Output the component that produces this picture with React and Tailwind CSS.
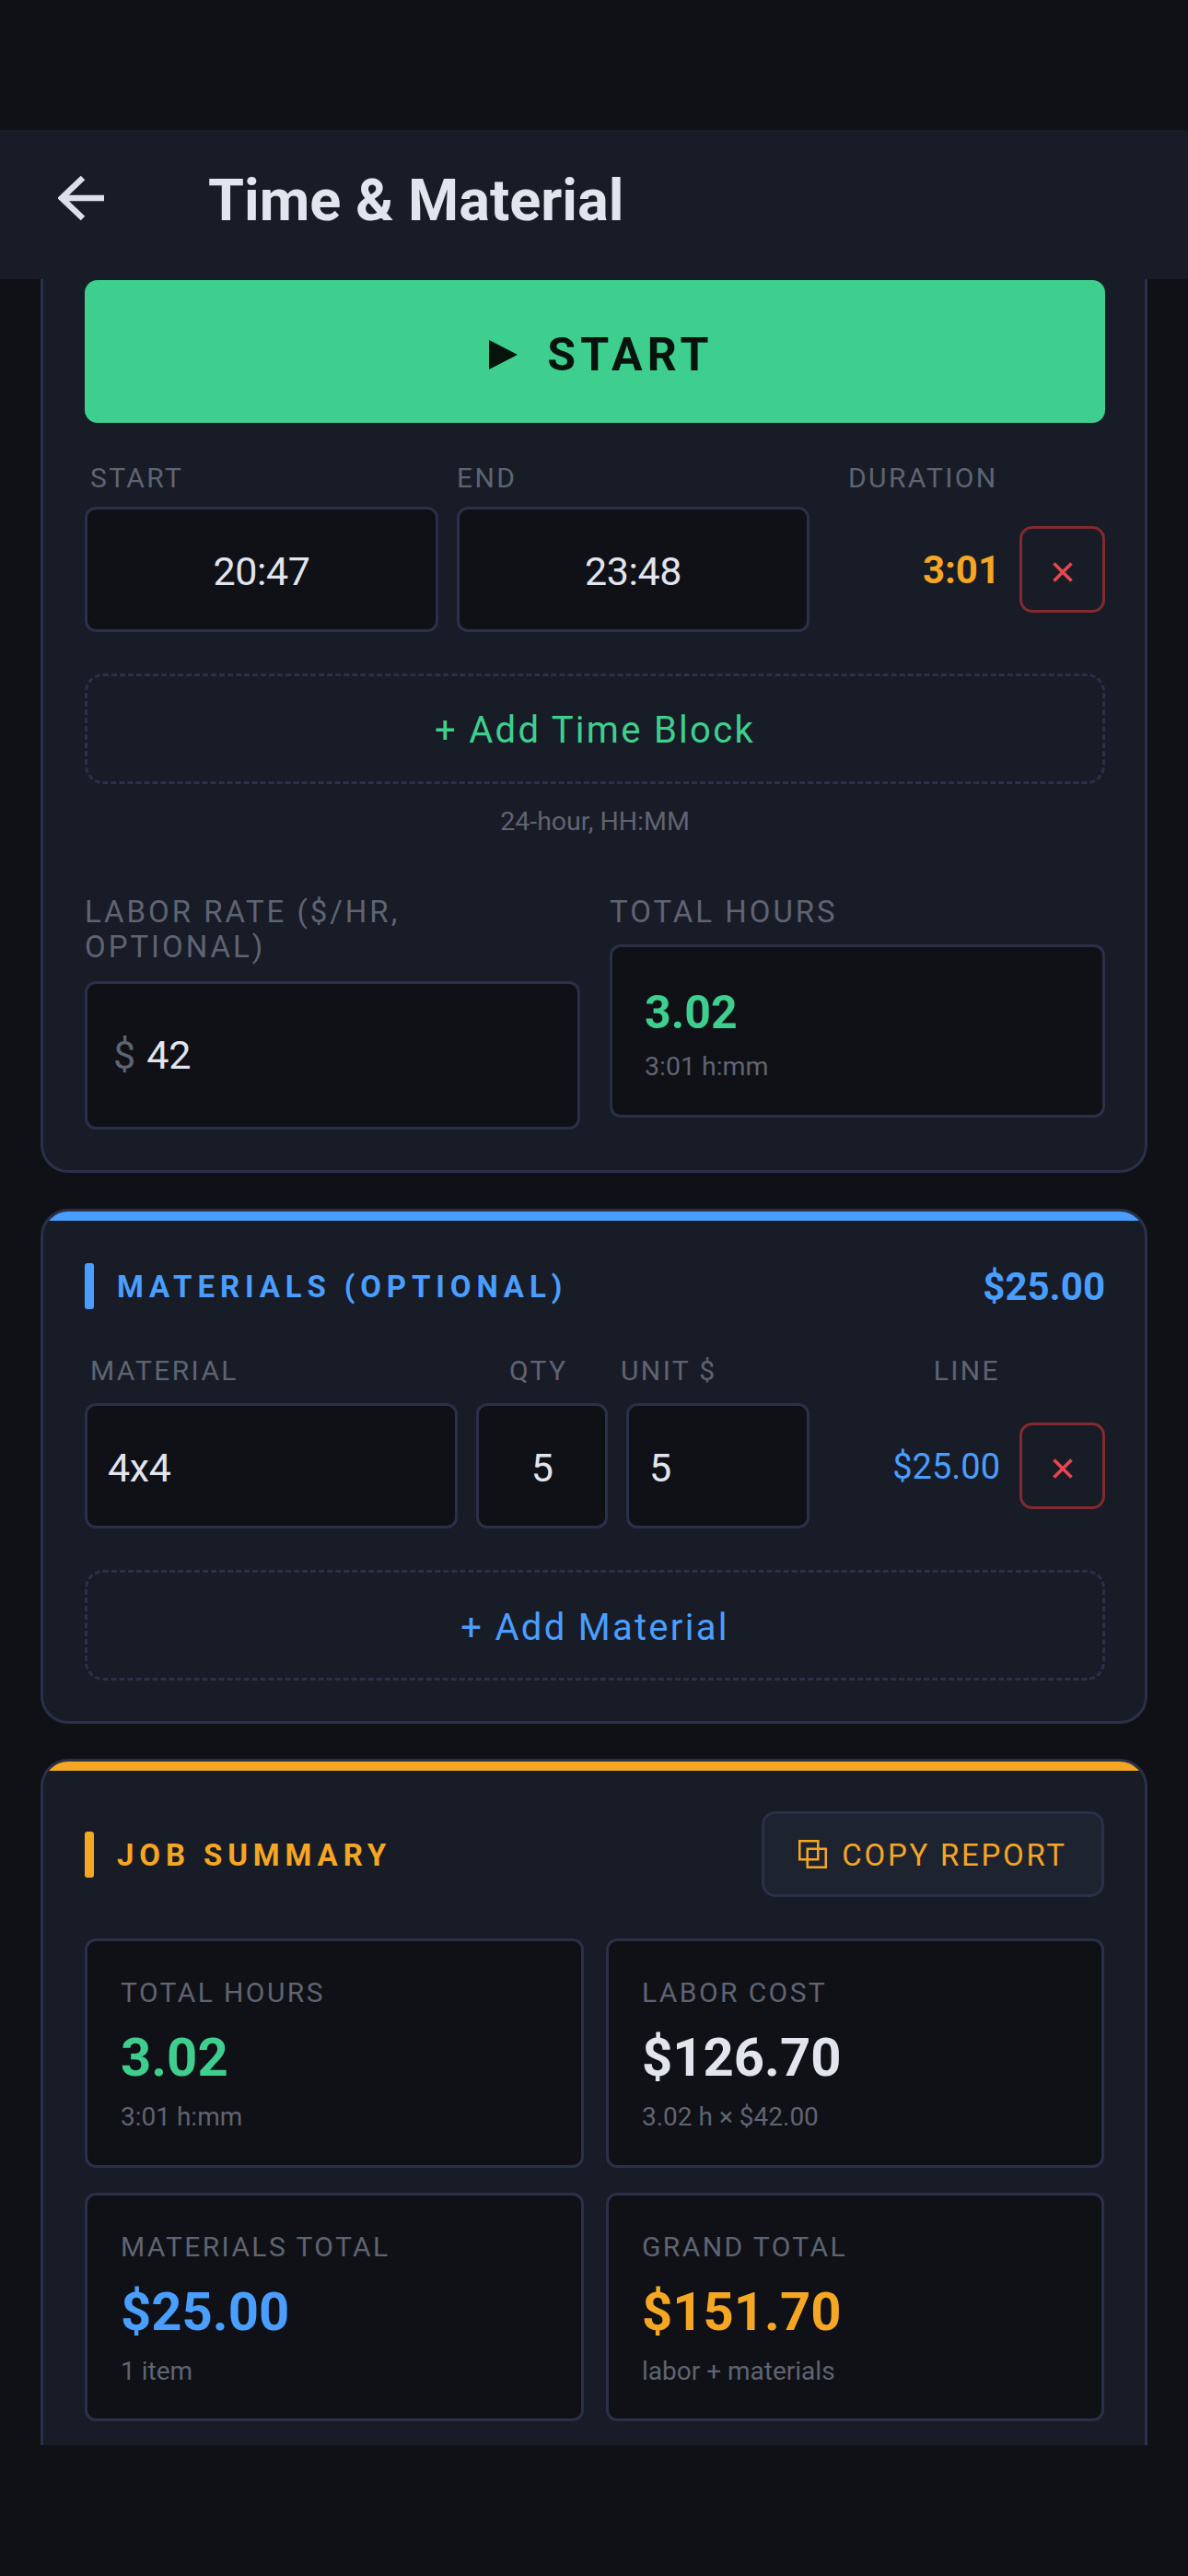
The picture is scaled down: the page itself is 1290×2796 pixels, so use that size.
const labelCls = "text-[30px] leading-[30px] tracking-[0.08em] text-[#5f6472]"
const bigLabelCls = "text-[33px] leading-[38px] tracking-[0.09em] text-[#5f6472]"
const inputCls = "w-full h-[136px] rounded-xl border-[3px] border-[#2a3048] bg-[#0f1116] pt-[3px] text-[43px] tracking-[-0.01em] text-[#e2e4ee] outline-none"

function DeleteButton() {
  return (
    <button className="w-[93px] h-[94px] justify-self-end rounded-[14px] border-[3px] border-[#842a2e] flex items-center justify-center">
      <svg className="mt-[6px]" width="22" height="22" viewBox="0 0 22 22" fill="none" stroke="#e5484d" strokeWidth="3.6">
        <path d="M1.5 1.5L20.5 20.5M20.5 1.5L1.5 20.5" />
      </svg>
    </button>
  )
}

function SectionTitle({ color, barColor, children }) {
  return (
    <div className="flex items-center gap-[25px]">
      <div className={`w-[10px] h-[50px] rounded-[3px] ${barColor}`} />
      <span className={`pt-[2px] text-[33px] leading-[48px] font-bold tracking-[0.178em] ${color}`}>{children}</span>
    </div>
  )
}

function StatCell({ label, value, sub, color }) {
  return (
    <div className="h-[248.5px] rounded-xl border-[3px] border-[#2a3048] bg-[#0f1116] pl-[36px] pt-[41px]">
      <div className={labelCls}>{label}</div>
      <div className={`mt-[21px] text-[58px] leading-[68px] font-bold ${color}`}>{value}</div>
      <div className="mt-[14px] text-[28px] leading-[34px] text-[#5f6472]">{sub}</div>
    </div>
  )
}

export default function App() {
  return (
    <div className="h-[2796px] bg-[#0f1116] font-['Roboto',sans-serif] flex flex-col">
      <div className="h-[141px]" />
      <header className="h-[162px] bg-[#181c27] flex items-center pl-[63px]">
        <svg className="-mt-[14px]" width="50" height="50" viewBox="0 0 50 50" fill="none" stroke="#dde0ea" strokeWidth="6.5">
          <path d="M50 25H5M27 3L4 25L27 47" />
        </svg>
        <h1 className="ml-[113px] -mt-[8px] text-[63px] font-bold text-[#e2e4ee]">Time &amp; Material</h1>
      </header>

      <main className="h-[2351px] overflow-hidden px-[44px]">
        {/* timer card, top is scrolled under the header */}
        <section className="bg-[#181c27] border-[3px] border-t-0 border-[#2a3048] rounded-b-[30px] pl-[45px] pr-[43px] pb-[44px] pt-px">
          <button className="w-full h-[155px] rounded-[14px] bg-[#3ecf8e] flex items-center justify-center gap-[32px] pt-[7px] pl-[14px] text-[#07130d]">
            <svg width="31" height="32" viewBox="0 0 31 32" fill="currentColor"><path d="M0 0L31 16L0 32Z" /></svg>
            <span className="text-[50px] font-bold tracking-[0.105em]">START</span>
          </button>

          <div className="mt-[45px] grid grid-cols-[384px_383px_187px_94px] gap-x-[20px] items-center">
            <div className={`${labelCls} pl-[6px]`}>START</div>
            <div className={labelCls}>END</div>
            <div className={`${labelCls} col-span-2 pl-[22px]`}>DURATION</div>
            <input readOnly value="20:47" className={`${inputCls} mt-[16px] text-center`} />
            <input readOnly value="23:48" className={`${inputCls} mt-[16px] text-center`} />
            <div className="mt-[16px] text-right text-[42px] font-bold text-[#f5a623]">3:01</div>
            <div className="mt-[16px] flex justify-end"><DeleteButton /></div>
          </div>

          <button className="mt-[45px] w-full h-[120px] pt-[3px] rounded-[20px] border-[3px] border-dashed border-[#2a3048] text-[40px] tracking-[0.057em] text-[#3ecf8e]">
            + Add Time Block
          </button>
          <div className="mt-[25px] text-center text-[28.5px] leading-[32px] text-[#5f6472]">24-hour, HH:MM</div>

          <div className="mt-[63px] grid grid-cols-2 gap-x-[32px] items-start">
            <div>
              <div className={`${bigLabelCls} mb-[18px]`}>LABOR RATE ($/HR,<br />OPTIONAL)</div>
              <div className="h-[161px] rounded-xl border-[3px] border-[#2a3048] bg-[#0f1116] flex items-center pl-[28px] text-[43px]">
                <span className="text-[#5f6472] mr-[12px]">$</span>
                <input readOnly value="42" className="w-full min-w-0 bg-transparent text-[#e2e4ee] outline-none" />
              </div>
            </div>
            <div>
              <div className={`${bigLabelCls} mb-[16px]`}>TOTAL HOURS</div>
              <div className="h-[188px] rounded-xl border-[3px] border-[#2a3048] bg-[#0f1116] pl-[35px] pt-[41px]">
                <div className="text-[50px] leading-[60px] font-bold text-[#3ecf8e]">3.02</div>
                <div className="mt-[12px] text-[28.5px] leading-[34px] text-[#5f6472]">3:01 h:mm</div>
              </div>
            </div>
          </div>
        </section>

        {/* materials */}
        <section className="mt-[39px] overflow-hidden bg-[#181c27] border-[3px] border-[#2a3048] rounded-[30px]">
          <div className="h-[10px] bg-[#4a9eff]" />
          <div className="pl-[45px] pr-[43px] pt-[46px] pb-[44px]">
            <div className="flex items-center justify-between">
              <SectionTitle color="text-[#4a9eff]" barColor="bg-[#4a9eff]">MATERIALS (OPTIONAL)</SectionTitle>
              <span className="pt-[2px] text-[42px] leading-[48px] font-bold text-[#4a9eff]">$25.00</span>
            </div>

            <div className="mt-[52px] flex">
              <div className={`${labelCls} w-[461px] pl-[6px]`}>MATERIAL</div>
              <div className={`${labelCls} w-[121px]`}>QTY</div>
              <div className={`${labelCls} w-[226px]`}>UNIT $</div>
              <div className={`${labelCls} w-[186px] text-right`}>LINE</div>
            </div>

            <div className="mt-[20px] grid grid-cols-[405px_143px_199px_187px_94px] gap-x-[20px] items-center">
              <input readOnly value="4x4" className={`${inputCls} pl-[22px]`} />
              <input readOnly value="5" className={`${inputCls} text-center`} />
              <input readOnly value="5" className={`${inputCls} pl-[22px]`} />
              <div className="pt-[3px] text-right text-[38px] text-[#4a9eff]">$25.00</div>
              <DeleteButton />
            </div>

            <button className="mt-[45px] w-full h-[120px] pt-[6px] rounded-[20px] border-[3px] border-dashed border-[#2a3048] text-[40px] tracking-[0.057em] text-[#4a9eff]">
              + Add Material
            </button>
          </div>
        </section>

        {/* summary, cut off by the bottom of the scroll area */}
        <section className="mt-[38px] overflow-hidden bg-[#181c27] border-[3px] border-[#2a3048] rounded-t-[30px]">
          <div className="h-[10px] bg-[#f5a623]" />
          <div className="pl-[45px] pr-[43px] pt-[44px] pb-[60px]">
            <div className="flex items-center justify-between">
              <SectionTitle color="text-[#f5a623]" barColor="bg-[#f5a623]">JOB SUMMARY</SectionTitle>
              <button className="mr-px w-[372px] h-[93px] rounded-[15px] border-[3px] border-[#2a3048] bg-[#1e2330] flex items-center justify-center gap-[16px] text-[#f5a623]">
                <svg width="31" height="31" viewBox="0 0 31 31" fill="none" stroke="currentColor" strokeWidth="2.5">
                  <rect x="1.25" y="1.25" width="20" height="20" />
                  <rect x="9.75" y="9.75" width="20" height="20" />
                </svg>
                <span className="pt-[2px] text-[33px] tracking-[0.083em]">COPY REPORT</span>
              </button>
            </div>

            <div className="mt-[45px] grid grid-cols-[542px_541px] gap-x-[24px] gap-y-[27px]">
              <StatCell label="TOTAL HOURS" value="3.02" sub="3:01 h:mm" color="text-[#3ecf8e]" />
              <StatCell label="LABOR COST" value="$126.70" sub="3.02 h × $42.00" color="text-[#e2e4ee]" />
              <StatCell label="MATERIALS TOTAL" value="$25.00" sub="1 item" color="text-[#4a9eff]" />
              <StatCell label="GRAND TOTAL" value="$151.70" sub="labor + materials" color="text-[#f5a623]" />
            </div>
          </div>
        </section>
      </main>
    </div>
  )
}
